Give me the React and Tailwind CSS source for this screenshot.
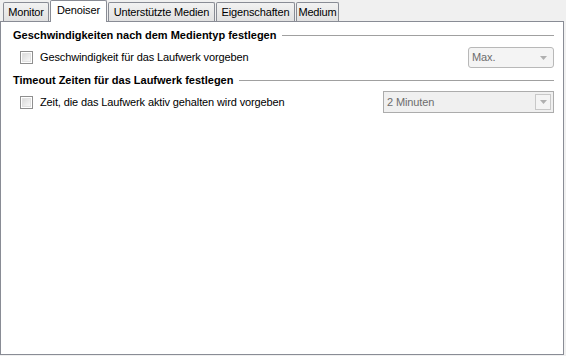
import React from 'react';

const tabs = [
  { label: 'Monitor', w: 'w-[46px]' },
  { label: 'Denoiser', w: 'w-[57px]' },
  { label: 'Unterstützte Medien', w: 'w-[107px]' },
  { label: 'Eigenschaften', w: 'w-[79px]' },
  { label: 'Medium', w: 'w-[43px]' },
];

function Checkbox() {
  return (
    <div className="w-[13px] h-[13px] border border-[#8f8f8f] bg-white p-[1px] shrink-0">
      <div className="w-full h-full bg-gradient-to-br from-[#dcdcdc] to-[#f8f8f8] border border-[#e2e2e2]" />
    </div>
  );
}

function Arrow() {
  return (
    <svg width="7" height="4" viewBox="0 0 7 4">
      <path d="M0 0 H7 L3.5 4 Z" fill="#b0b0b0" />
    </svg>
  );
}

function SectionHeader({ title }) {
  return (
    <div className="flex items-center gap-[6px] pl-[12px] pr-[9px] h-[16px]">
      <span className="font-bold text-black whitespace-nowrap">{title}</span>
      <div className="flex-1 h-px bg-[#a0a0a0]" />
    </div>
  );
}

export default function App() {
  return (
    <div
      className="w-[566px] h-[356px] bg-[#f0f0f0] text-[11px] leading-[13px] text-black"
      style={{ fontFamily: '"Liberation Sans", Arial, sans-serif' }}
    >
      {/* Tab strip */}
      <div className="flex items-end h-[21px] pl-[3px] relative z-10 tracking-[-0.15px]">
        {tabs.map((t, i) =>
          i === 1 ? (
            <div
              key={t.label}
              className={`${t.w} h-[22px] -mb-px pt-[3px] mr-[1px] bg-white border border-b-0 border-[#898c95] rounded-t-[2px] flex justify-center`}
            >
              {t.label}
            </div>
          ) : (
            <div
              key={t.label}
              className={`${t.w} h-[19px] mr-[1px] bg-gradient-to-b from-[#f2f2f2] to-[#e1e1e1] border border-b-0 border-[#898c95] rounded-t-[2px] flex items-center justify-center`}
            >
              {t.label}
            </div>
          )
        )}
      </div>

      {/* Panel */}
      <div className="w-[564px] h-[334px] bg-white border border-[#898c95] pt-[5px]">
        <SectionHeader title="Geschwindigkeiten nach dem Medientyp festlegen" />
        <div className="flex items-center pl-[19px] pr-[9px] mt-[4px] h-[21px] tracking-[-0.12px]">
          <Checkbox />
          <span className="ml-[7px] flex-1">Geschwindigkeit für das Laufwerk vorgeben</span>
          <div className="w-[86px] h-[21px] border border-[#b8b8b8] rounded-[3px] bg-[#f4f4f4] flex items-center pl-[3px] pr-[6px] text-[#6d6d6d]">
            <span className="flex-1">Max.</span>
            <Arrow />
          </div>
        </div>
        <div className="mt-[4px]">
          <SectionHeader title="Timeout Zeiten für das Laufwerk festlegen" />
        </div>
        <div className="flex items-center pl-[19px] pr-[9px] mt-[3px] h-[22px] tracking-[-0.12px]">
          <Checkbox />
          <span className="ml-[7px] flex-1">Zeit, die das Laufwerk aktiv gehalten wird vorgeben</span>
          <div className="w-[171px] h-[22px] border border-[#acacac] bg-[#f0f0f0] flex items-center pl-[3px] pr-[2px] text-[#6d6d6d]">
            <span className="flex-1">2 Minuten</span>
            <div className="w-[16px] h-[16px] border border-[#c8c8c8] bg-[#f4f4f4] flex items-center justify-center">
              <Arrow />
            </div>
          </div>
        </div>
      </div>
    </div>
  );
}
